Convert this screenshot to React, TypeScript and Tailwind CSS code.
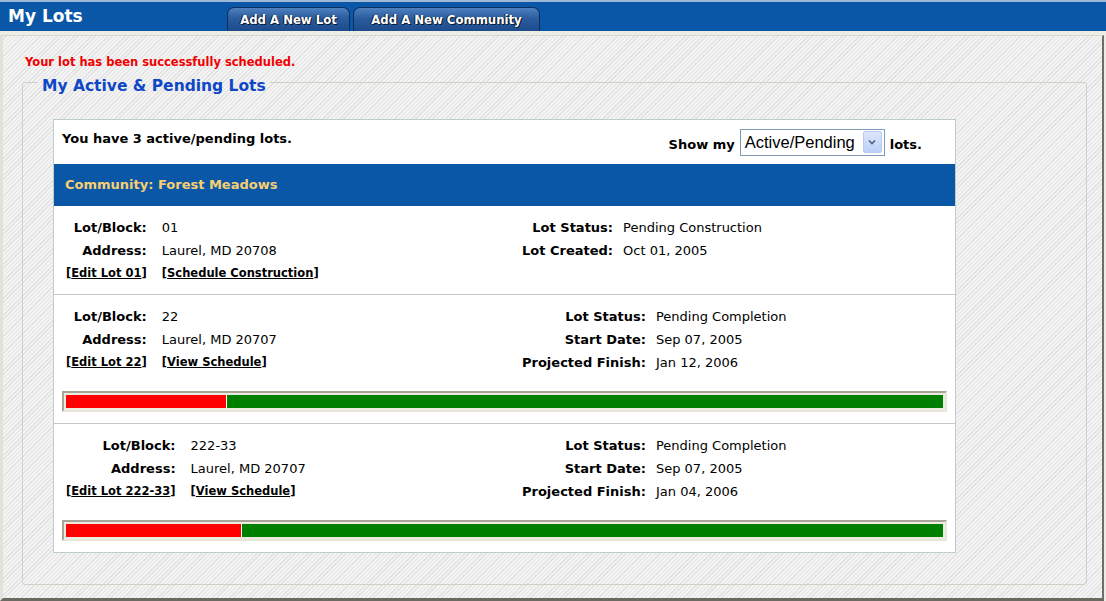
import React from "react";

type Field = { label: string; value: string };

type Lot = {
  left: Field[];
  right: Field[];
  links: string[];
  progress?: number;
};

const lots: Lot[] = [
  {
    left: [
      { label: "Lot/Block:", value: "01" },
      { label: "Address:", value: "Laurel, MD 20708" },
    ],
    right: [
      { label: "Lot Status:", value: "Pending Construction" },
      { label: "Lot Created:", value: "Oct 01, 2005" },
    ],
    links: ["Edit Lot 01", "Schedule Construction"],
  },
  {
    left: [
      { label: "Lot/Block:", value: "22" },
      { label: "Address:", value: "Laurel, MD 20707" },
    ],
    right: [
      { label: "Lot Status:", value: "Pending Completion" },
      { label: "Start Date:", value: "Sep 07, 2005" },
      { label: "Projected Finish:", value: "Jan 12, 2006" },
    ],
    links: ["Edit Lot 22", "View Schedule"],
    progress: 18.2,
  },
  {
    left: [
      { label: "Lot/Block:", value: "222-33" },
      { label: "Address:", value: "Laurel, MD 20707" },
    ],
    right: [
      { label: "Lot Status:", value: "Pending Completion" },
      { label: "Start Date:", value: "Sep 07, 2005" },
      { label: "Projected Finish:", value: "Jan 04, 2006" },
    ],
    links: ["Edit Lot 222-33", "View Schedule"],
    progress: 19.9,
  },
];

function Tab({ label, width }: { label: string; width: string }) {
  return (
    <div
      className={`${width} h-[24px] rounded-t-[7px] border border-b-0 border-[#08305f] bg-[linear-gradient(#4f80c0,#2a5c9e_45%,#1d4c8c)] flex items-center justify-center font-['DejaVu_Sans_Condensed','Liberation_Sans',sans-serif] text-[13px] font-bold text-white [text-shadow:1px_1px_0_#0a1a30,-1px_0_0_#0a1a30]`}
    >
      {label}
    </div>
  );
}

function LinkText({ text }: { text: string }) {
  return (
    <div className="text-[11.5px] leading-[23px] font-bold text-black">
      [<span className="underline">{text}</span>]
    </div>
  );
}

function FieldGrid({ fields, gap, links }: { fields: Field[]; gap: string; links?: string[] }) {
  return (
    <div className={`grid grid-cols-[auto_1fr] ${gap} content-start`}>
      {fields.map((f) => (
        <React.Fragment key={f.label}>
          <div className="text-right text-[13px] leading-[23px] font-bold">{f.label}</div>
          <div className="text-[13px] leading-[23px]">{f.value}</div>
        </React.Fragment>
      ))}
      {links && (
        <>
          <div className="flex justify-end">
            <LinkText text={links[0]} />
          </div>
          <LinkText text={links[1]} />
        </>
      )}
    </div>
  );
}

function LotRow({ lot, last }: { lot: Lot; last: boolean }) {
  return (
    <div className={`pt-[10px] ${last ? "" : "border-b border-[#c8c8c8]"} ${lot.progress ? "pb-[11px]" : "pb-[9px]"}`}>
      <div className="flex">
        <div className="w-[468px] pl-[12px]">
          <FieldGrid fields={lot.left} gap="gap-x-[15px]" links={lot.links} />
        </div>
        <FieldGrid fields={lot.right} gap="gap-x-[10px]" />
      </div>
      {lot.progress !== undefined && (
        <div className="mx-[8px] mt-[17px] h-[21px] border-2 border-t-[#a8a498] border-l-[#a8a498] border-b-[#e8e6da] border-r-[#e8e6da] bg-[#ecebe0] p-[2px]">
          <div className="flex h-full">
            <div className="h-full bg-[#ff0000]" style={{ width: `${lot.progress}%` }} />
            <div className="w-[1px] h-full bg-white" />
            <div className="h-full flex-1 bg-[#008000]" />
          </div>
        </div>
      )}
    </div>
  );
}

export default function App() {
  return (
    <div className="w-[1106px] h-[601px] bg-[#edede5] font-['DejaVu_Sans','Liberation_Sans',sans-serif] text-black overflow-hidden">
      <div className="h-[31px] border-t-2 border-[#9fb8d6] bg-[#0b57a7] flex items-end">
        <div className="w-[227px] self-center pl-[8px] text-[17px] font-bold text-white leading-none">My Lots</div>
        <div className="flex gap-[3px]">
          <Tab label="Add A New Lot" width="w-[123px]" />
          <Tab label="Add A New Community" width="w-[187px]" />
        </div>
      </div>
      <div className="mt-[4px] w-[1104px] h-[566px] border-l-[3px] border-l-[#e2e2da] border-t border-t-[#d8d8d0] border-r-[2px] border-r-[#6e6e64] border-b-[3px] border-b-[#6a6a60] bg-[repeating-linear-gradient(135deg,#f3f3f3_0px,#f3f3f3_2px,#e2e2e2_2px,#e2e2e2_3px)] pt-[18px] pl-[19px] pr-[15px]">
        <div className="pl-[3px] text-[11.5px] font-bold text-[#f00000] leading-[16px]">
          Your lot has been successfully scheduled.
        </div>
        <fieldset className="border border-[#d0d0c4] rounded-[3px] h-[515px]">
          <legend className="ml-[15px] pt-[7px] px-[4px] text-[15.5px] font-bold text-[#0f47c6] leading-[18px]">
            My Active &amp; Pending Lots
          </legend>
          <div className="mt-[24px] ml-[30px] w-[903px] border border-[#bfcccc] bg-white">
            <div className="h-[44px] flex justify-between px-[8px]">
              <div className="pt-[9px] text-[13px] font-bold">You have 3 active/pending lots.</div>
              <div className="flex items-center pr-[25px] gap-[5px] text-[13px] font-bold">
                <span className="pt-[6px]">Show my</span>
                <div className="w-[145px] h-[27px] border border-[#7f9db9] bg-white flex items-center justify-between pl-[4px] pr-[2px]">
                  <span className="font-['Liberation_Sans',sans-serif] text-[16.5px] font-normal">Active/Pending</span>
                  <div className="w-[19px] h-[22px] rounded-[2px] border border-[#b8ccf0] bg-[linear-gradient(#dbe6fb,#bccff5)] flex items-center justify-center">
                    <svg width="8" height="6" viewBox="0 0 8 6">
                      <path d="M1 1.5 L4 4.5 L7 1.5" stroke="#4d6185" strokeWidth="1.6" fill="none" />
                    </svg>
                  </div>
                </div>
                <span className="pt-[6px]">lots.</span>
              </div>
            </div>
            <div className="h-[42px] bg-[#0b57a7] flex items-center pl-[11px] text-[13px] font-bold text-[#f6cf72]">
              Community: Forest Meadows
            </div>
            {lots.map((lot, i) => (
              <LotRow key={i} lot={lot} last={i === lots.length - 1} />
            ))}
          </div>
        </fieldset>
      </div>
    </div>
  );
}
